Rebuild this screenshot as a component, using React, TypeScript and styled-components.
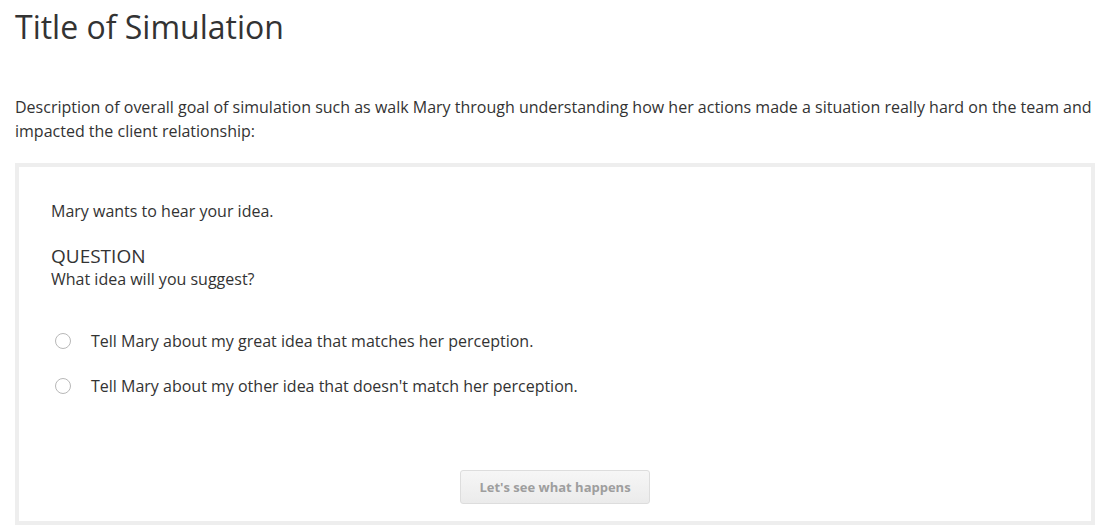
import * as React from 'react';
import styled, { createGlobalStyle } from 'styled-components';

const GlobalStyle = createGlobalStyle`
  html, body {
    margin: 0;
    padding: 0;
    background: #fff;
  }
  body {
    font-family: 'Open Sans', 'Noto Sans', sans-serif;
    color: #333;
  }
`;

const Page = styled.div`
  padding: 0 22px 0 15px;
`;

const Title = styled.h1`
  margin: 0;
  padding-top: 5px;
  font-size: 32px;
  font-weight: 400;
  line-height: 44px;
  color: #333;
`;

const Description = styled.p`
  margin: 46px 0 20px;
  font-size: 16px;
  line-height: 24px;
`;

const Card = styled.div`
  border: 4px solid #eee;
  padding: 32px 32px 17px;
`;

const Prompt = styled.p`
  margin: 0 0 22px;
  font-size: 16px;
  line-height: 24px;
`;

const QuestionLabel = styled.div`
  font-size: 19px;
  line-height: 22px;
  text-transform: uppercase;
`;

const QuestionText = styled.div`
  font-size: 16px;
  line-height: 24px;
  margin-bottom: 38px;
`;

const Options = styled.div`
  display: flex;
  flex-direction: column;
  gap: 21px;
`;

const Option = styled.label`
  display: flex;
  align-items: center;
  gap: 20px;
  padding-left: 4px;
  font-size: 16px;
  line-height: 24px;
  cursor: pointer;
`;

const Radio = styled.span`
  width: 14px;
  height: 14px;
  border-radius: 50%;
  border: 1px solid #b8b8b8;
  background: #fff;
  flex: none;
`;

const Actions = styled.div`
  display: flex;
  justify-content: center;
  margin-top: 72px;
`;

const Button = styled.button`
  width: 190px;
  height: 34px;
  border: 1px solid #ddd;
  border-radius: 3px;
  background: linear-gradient(#f6f6f6, #ebebeb);
  color: #9e9e9e;
  font-family: 'Open Sans', 'Noto Sans', sans-serif;
  font-size: 13px;
  font-weight: 700;
  cursor: default;
`;

const options = [
  'Tell Mary about my great idea that matches her perception.',
  "Tell Mary about my other idea that doesn't match her perception.",
];

export default function App() {
  return (
    <>
      <GlobalStyle />
      <Page>
        <Title>Title of Simulation</Title>
        <Description>
          Description of overall goal of simulation such as walk Mary through understanding how her
          actions made a situation really hard on the team and impacted the client relationship:
        </Description>
        <Card>
          <Prompt>Mary wants to hear your idea.</Prompt>
          <QuestionLabel>Question</QuestionLabel>
          <QuestionText>What idea will you suggest?</QuestionText>
          <Options>
            {options.map((o) => (
              <Option key={o}>
                <Radio />
                {o}
              </Option>
            ))}
          </Options>
          <Actions>
            <Button disabled>Let's see what happens</Button>
          </Actions>
        </Card>
      </Page>
    </>
  );
}
